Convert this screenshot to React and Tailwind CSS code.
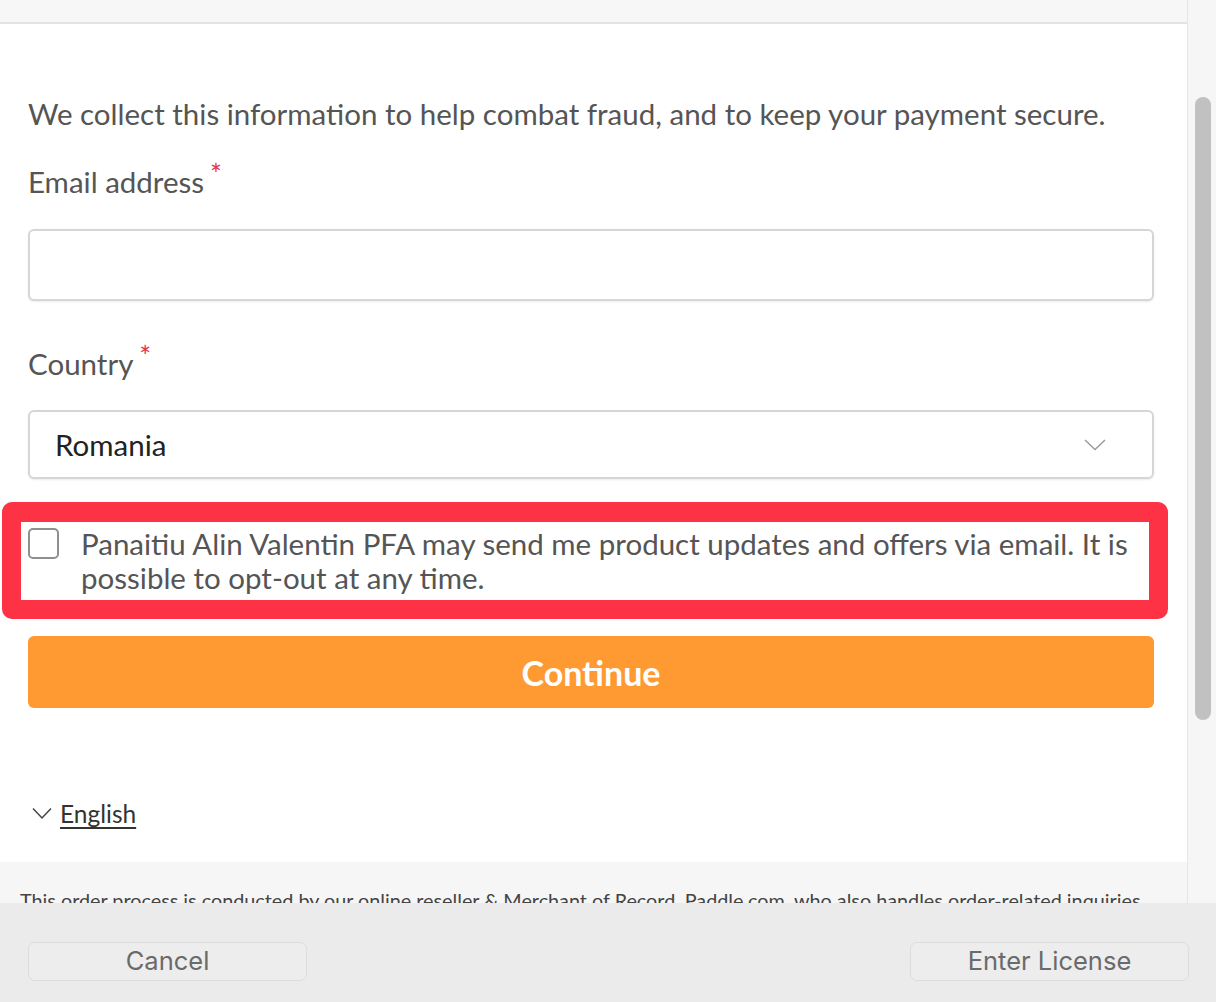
export default function App() {
  return (
    <div className="w-[1216px] h-[1002px] flex flex-col overflow-hidden bg-white font-['Lato','Noto_Sans',sans-serif]">
      <div className="flex h-[903px]">
        <div className="flex-1 flex flex-col overflow-hidden">
          <div className="h-[24px] shrink-0 bg-[#f7f7f7] border-b-2 border-[#e3e3e3]" />
          <div className="flex flex-col pl-[28px] pr-[33px] pt-[73px] shrink-0">
            <p className="text-[29.5px] leading-[34px] text-[#555555] whitespace-nowrap">
              We collect this information to help combat fraud, and to keep your payment secure.
            </p>
            <div className="mt-[34px] text-[29.5px] leading-[34px] text-[#555555]">
              Email address
              <span className="relative top-[-8px] ml-[6px] text-[28px] leading-none text-[#e2334a]">*</span>
            </div>
            <div className="mt-[30px] h-[72px] rounded-[6px] border-2 border-[#d6d6d6] bg-white shadow-[0_1px_2px_rgba(0,0,0,0.08)]" />
            <div className="mt-[46px] text-[29.5px] leading-[34px] text-[#555555]">
              Country
              <span className="relative top-[-8px] ml-[6px] text-[28px] leading-none text-[#e2334a]">*</span>
            </div>
            <div className="mt-[29px] h-[69px] rounded-[6px] border-2 border-[#d6d6d6] bg-white shadow-[0_1px_2px_rgba(0,0,0,0.08)] flex items-center pl-[25px] pr-[46px]">
              <span className="flex-1 text-[29.5px] leading-[34px] text-[#222222]">Romania</span>
              <svg width="22" height="12" viewBox="0 0 22 12" fill="none">
                <polyline points="1,1 11,10.5 21,1" stroke="#9a9a9a" strokeWidth="1.4" />
              </svg>
            </div>
            <div className="mt-[23px] ml-[-26px] mr-[-14px] border-[19px] border-t-[20px] border-[#fd3244] rounded-[10px] bg-white flex items-start pl-[7px] pt-[5px] pb-[5px]">
              <div className="mt-[1px] w-[31px] h-[31px] shrink-0 rounded-[5px] border-2 border-[#8f8f8f] bg-white" />
              <p className="ml-[22px] text-[29.5px] leading-[34px] text-[#555555]">
                Panaitiu Alin Valentin PFA may send me product updates and offers via email. It is possible to opt-out at any time.
              </p>
            </div>
            <button className="mt-[17px] h-[72px] rounded-[6px] bg-[#ff9a33] text-white text-[34px] font-bold flex items-center justify-center">
              Continue
            </button>
            <div className="mt-[91px] flex items-center ml-[4px] h-[29px]">
              <svg width="20" height="13" viewBox="0 0 20 13" fill="none">
                <polyline points="1,1.5 10,11 19,1.5" stroke="#444444" strokeWidth="1.5" />
              </svg>
              <span className="ml-[8px] text-[24.5px] leading-[29px] text-[#333333] underline underline-offset-[4px] decoration-[1.5px]">
                English
              </span>
            </div>
          </div>
          <div className="mt-[34px] flex-1 bg-[#f6f6f7] px-[20px] pt-[26px]">
            <p className="text-[19.8px] leading-[24px] text-[#444444] whitespace-nowrap">
              This order process is conducted by our online reseller &amp; Merchant of Record, Paddle.com, who also handles order-related inquiries
            </p>
          </div>
        </div>
        <div className="w-[29px] shrink-0 bg-[#f6f6f6] border-l border-[#e6e6e6] flex flex-col items-center pt-[97px]">
          <div className="ml-[2px] w-[16px] h-[623px] rounded-full bg-[#c1c1c1]" />
        </div>
      </div>
      <div className="flex-1 bg-[#ebebeb] flex justify-between items-start pl-[28px] pr-[27px] pt-[39px] font-['Inter','Liberation_Sans',sans-serif]">
        <button className="w-[279px] h-[39px] rounded-[7px] border border-[#dcdcdc] bg-[#ededed] text-[25.5px] text-[#6a6a6a] flex items-center justify-center">
          Cancel
        </button>
        <button className="w-[279px] h-[39px] rounded-[7px] border border-[#dcdcdc] bg-[#ededed] text-[25.5px] text-[#6a6a6a] flex items-center justify-center">
          Enter License
        </button>
      </div>
    </div>
  );
}
